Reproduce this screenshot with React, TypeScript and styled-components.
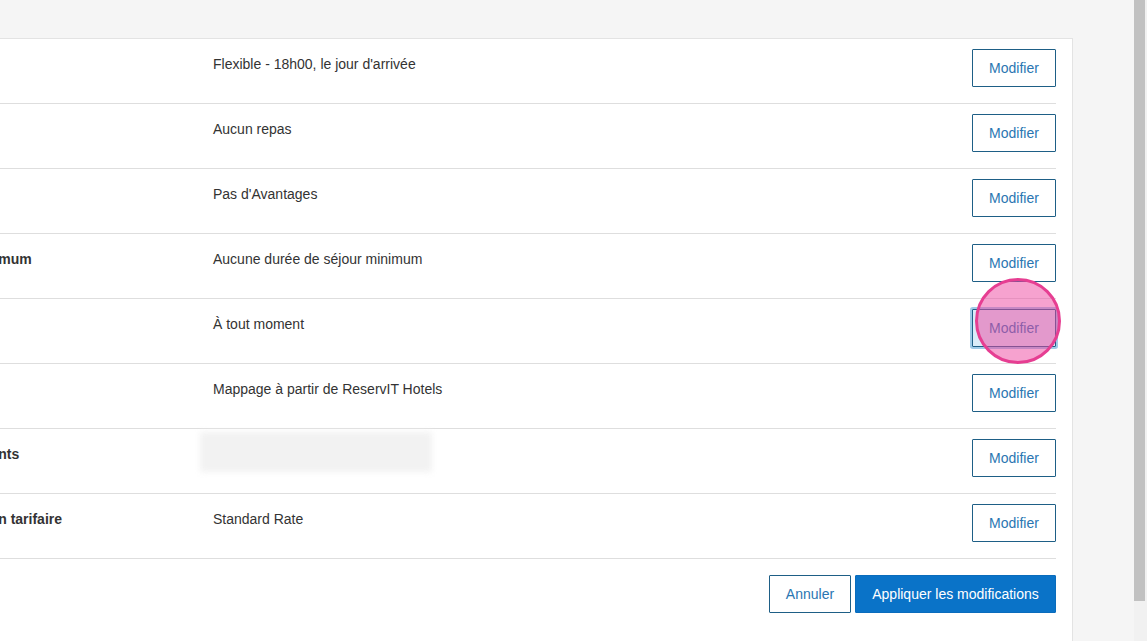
import React from 'react';
import styled, { createGlobalStyle } from 'styled-components';

const GlobalStyle = createGlobalStyle`
    html, body {
        margin : 0;
        padding : 0;
        height : 641px;
        overflow : hidden;
        background : #f5f5f5;
        font-family : "Liberation Sans", Arial, sans-serif;
    }
    * { box-sizing : border-box; }
`;

interface RowData {
    label: string;
    value?: string;
    blurred?: boolean;
    focused?: boolean;
}

const rows: RowData[] = [
    { label: 'Annulation', value: "Flexible - 18h00, le jour d'arrivée" },
    { label: 'Repas', value: 'Aucun repas' },
    { label: 'Avantages', value: "Pas d'Avantages" },
    { label: 'Séjour minimum', value: 'Aucune durée de séjour minimum' },
    { label: 'Délai', value: 'À tout moment', focused: true },
    { label: 'Mappage', value: 'Mappage à partir de ReservIT Hotels' },
    { label: 'Hébergements', blurred: true },
    { label: 'Nom du plan tarifaire', value: 'Standard Rate' },
];

const App: React.FC = () => {
    return (
        <>
            <GlobalStyle />
            <Screen>
                <Page>
                    <TopSpace />
                    <Card>
                        {rows.map((row) => (
                            <Row key={row.label}>
                                <Label>{row.label}</Label>
                                <Value>
                                    {row.blurred ? <BlurBox /> : row.value}
                                </Value>
                                <ButtonSlot>
                                    <OutlineButton focused={row.focused}>Modifier</OutlineButton>
                                    {row.focused && <ClickMarker />}
                                </ButtonSlot>
                            </Row>
                        ))}
                        <Footer>
                            <OutlineButton wide>Annuler</OutlineButton>
                            <PrimaryButton>Appliquer les modifications</PrimaryButton>
                        </Footer>
                    </Card>
                </Page>
                <ScrollTrack>
                    <ScrollThumb />
                </ScrollTrack>
            </Screen>
        </>
    );
};

export default App;

const Screen = styled.div`
    display : flex;
    width : 1147px;
    height : 641px;
    overflow : hidden;
`

const Page = styled.div`
    flex : 1;
    display : flex;
    flex-direction : column;
    overflow : hidden;
    padding-right : 61px;
`

const TopSpace = styled.div`
    height : 38px;
    flex-shrink : 0;
`

const Card = styled.div`
    margin-left : -99px;
    flex : 1;
    background : #ffffff;
    border : 1px solid #e3e3e3;
    border-bottom : none;
    padding-right : 16px;
`

const Row = styled.div`
    display : grid;
    grid-template-columns : 291px 1fr auto;
    height : 65px;
    padding-left : 20px;
    border-bottom : 1px solid #dedede;
`

const Label = styled.div`
    padding-top : 15px;
    font-size : 14px;
    line-height : 20px;
    font-weight : 700;
    color : #333333;
    white-space : nowrap;
`

const Value = styled.div`
    padding-top : 15px;
    font-size : 14px;
    line-height : 20px;
    color : #333333;
`

const BlurBox = styled.div`
    width : 232px;
    height : 40px;
    margin : -12px 0 0 -13px;
    background : #f2f2f2;
    filter : blur(3px);
`

const ButtonSlot = styled.div`
    position : relative;
    padding-top : 10px;
`

const OutlineButton = styled.button<{ focused?: boolean; wide?: boolean }>`
    width : ${(p) => (p.wide ? '82px' : '84px')};
    height : 38px;
    padding : 0;
    background : ${(p) => (p.focused ? '#d9ecf8' : '#ffffff')};
    border : 1px solid #1e5f86;
    border-radius : 1px;
    color : #2a76b2;
    font-family : "Liberation Sans", Arial, sans-serif;
    font-size : 14px;
    box-shadow : ${(p) => (p.focused ? '0 0 0 2px #9fcbe8' : 'none')};
    cursor : pointer;
`

const ClickMarker = styled.div`
    position : absolute;
    left : 3px;
    top : -21px;
    width : 86px;
    height : 86px;
    border-radius : 50%;
    background : rgba(238, 70, 160, 0.5);
    border : 3px solid #e63e92;
    pointer-events : none;
`

const Footer = styled.div`
    display : flex;
    justify-content : flex-end;
    gap : 4px;
    padding-top : 16px;
`

const PrimaryButton = styled.button`
    width : 201px;
    height : 38px;
    padding : 0;
    background : #0a73c8;
    border : 1px solid #0a6cbc;
    border-radius : 1px;
    color : #ffffff;
    font-family : "Liberation Sans", Arial, sans-serif;
    font-size : 14px;
    cursor : pointer;
`

const ScrollTrack = styled.div`
    width : 13px;
    background : #f1f1f1;
`

const ScrollThumb = styled.div`
    width : 11px;
    height : 601px;
    background : #c1c1c1;
`
